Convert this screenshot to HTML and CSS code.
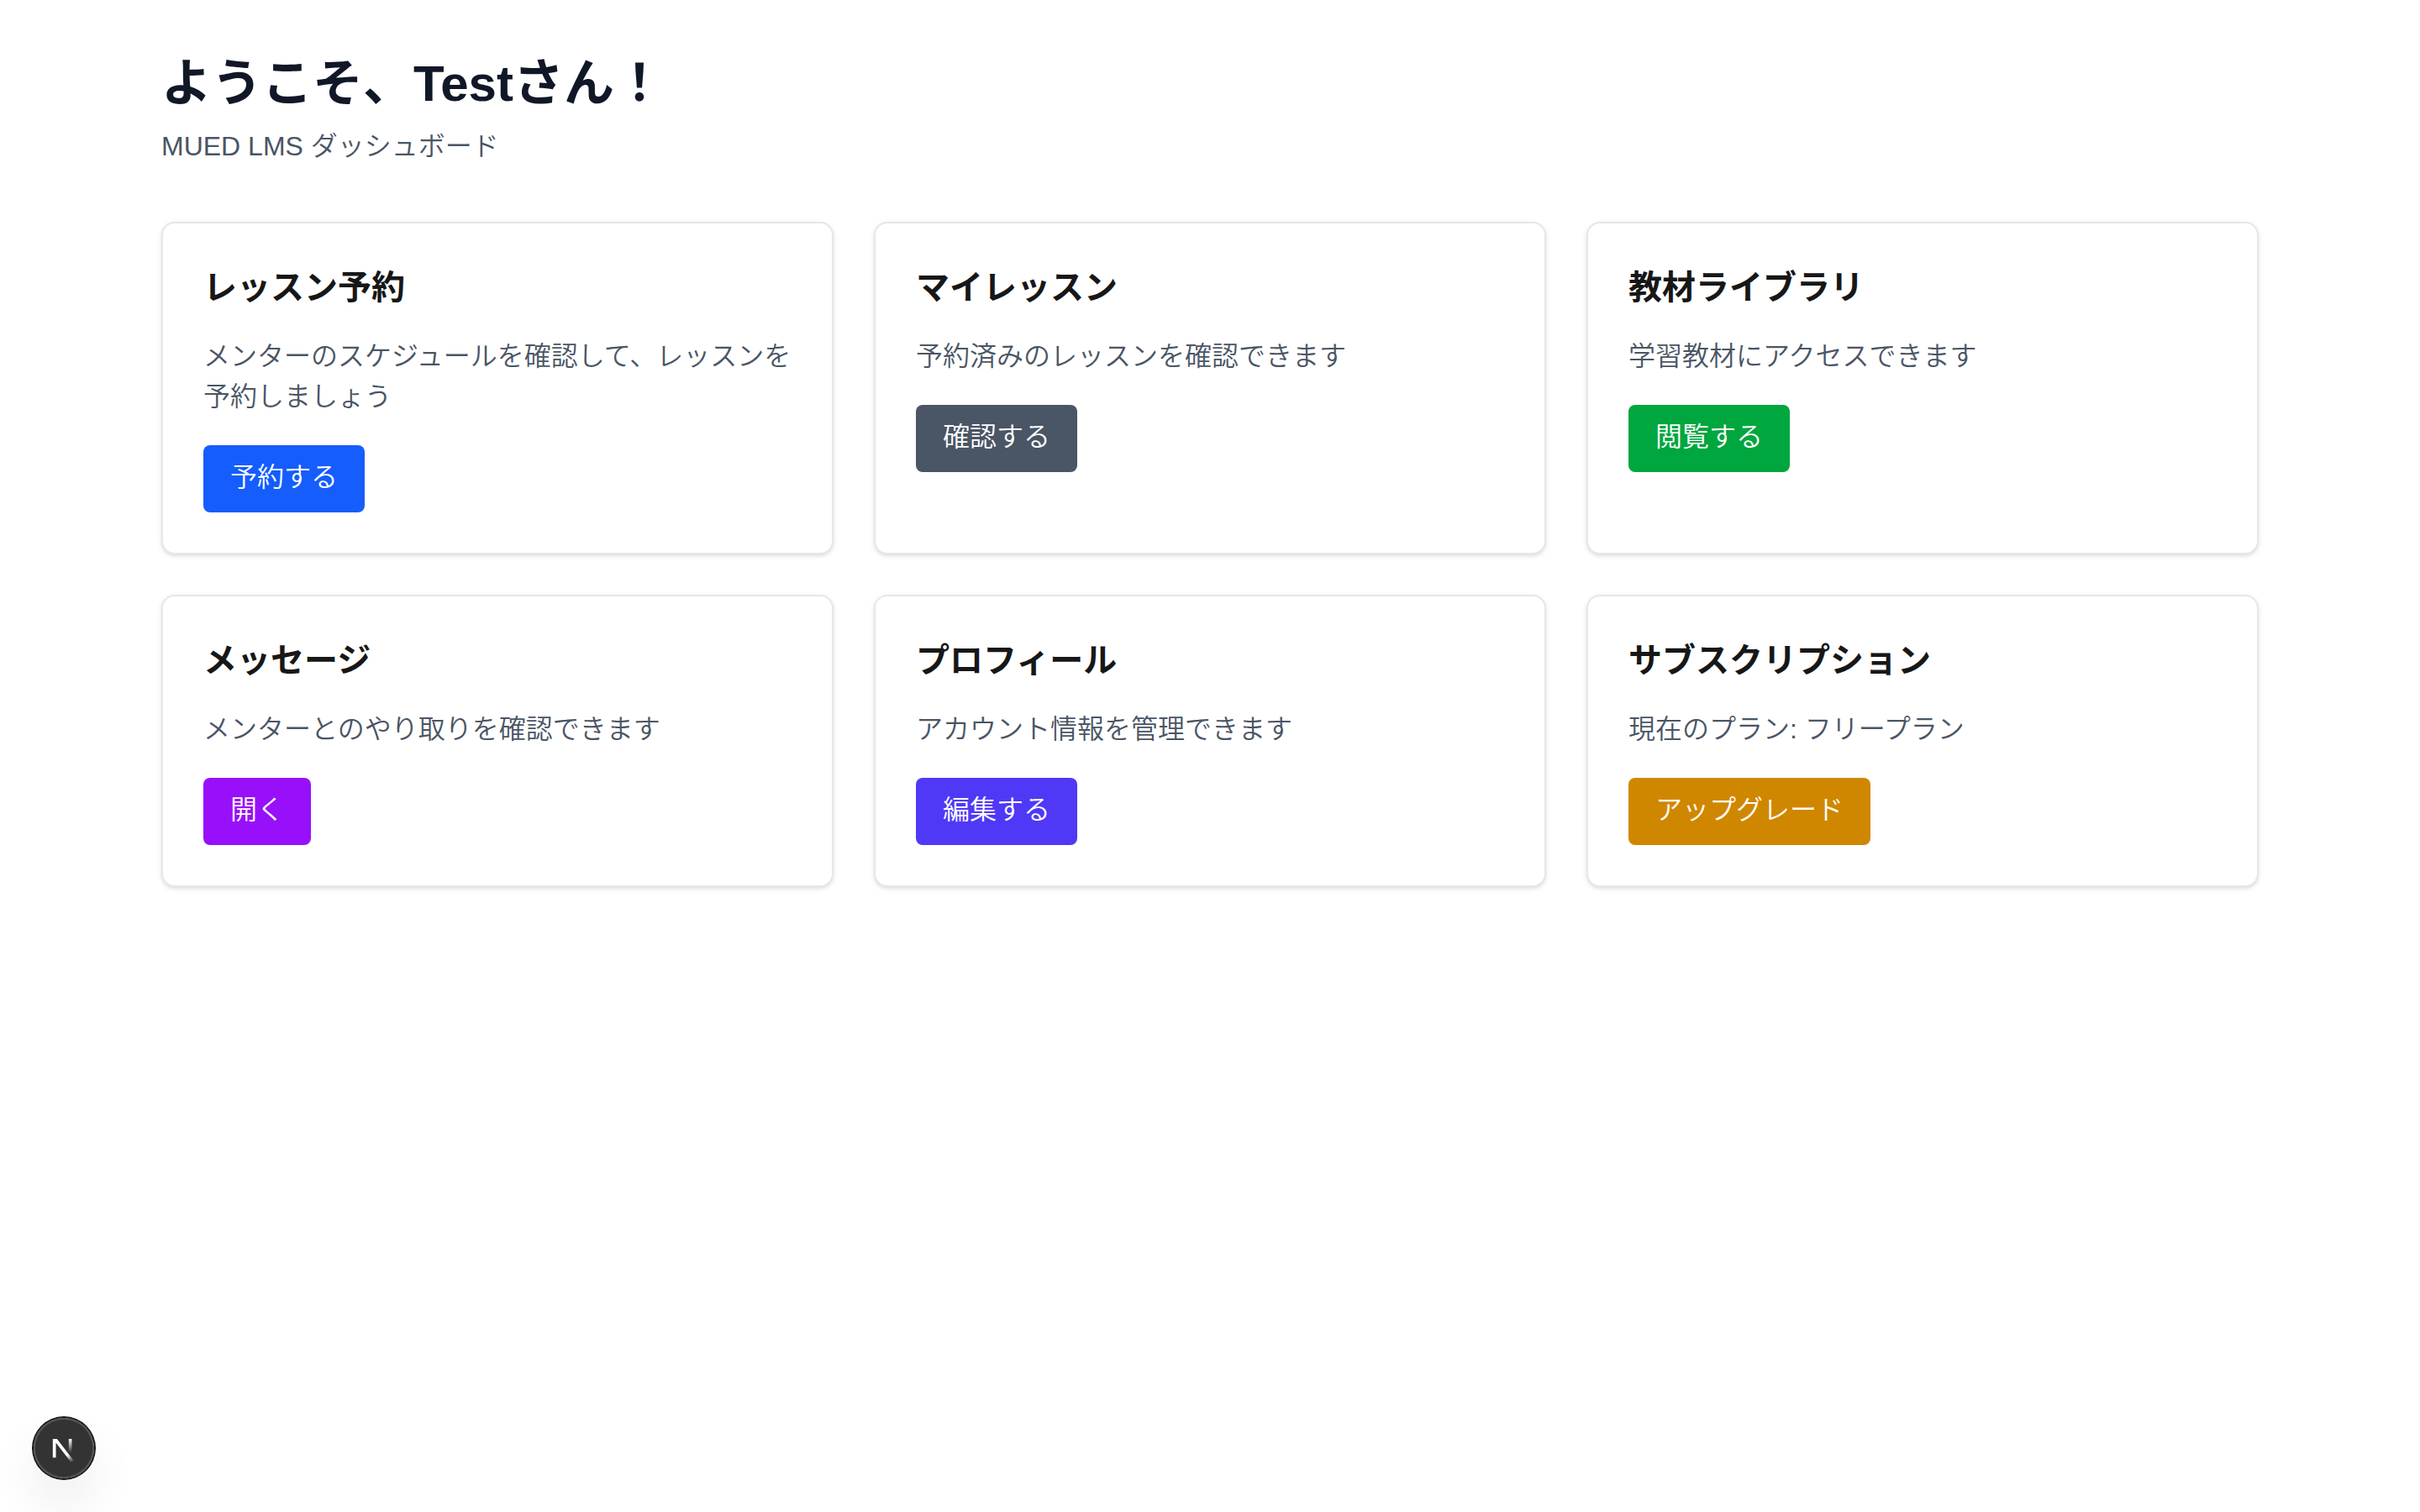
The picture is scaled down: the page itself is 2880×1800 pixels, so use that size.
FILE: index.html
```html
<!DOCTYPE html>
<html lang="ja">
<head>
<meta charset="utf-8">
<meta name="viewport" content="width=device-width, initial-scale=1">
<title>MUED LMS ダッシュボード</title>
<link rel="stylesheet" href="styles.css">
</head>
<body>
<main class="dashboard">
  <header class="intro">
    <h1 class="intro-title">ようこそ、Testさん！</h1>
    <p class="intro-text">MUED LMS ダッシュボード</p>
  </header>
  <div class="cards">
    <section class="card">
      <h2 class="card-title">レッスン予約</h2>
      <p class="card-text">メンターのスケジュールを確認して、レッスンを予約しましょう</p>
      <a class="action action-blue" href="#booking">予約する</a>
    </section>
    <section class="card">
      <h2 class="card-title">マイレッスン</h2>
      <p class="card-text">予約済みのレッスンを確認できます</p>
      <a class="action action-gray" href="#lessons">確認する</a>
    </section>
    <section class="card">
      <h2 class="card-title">教材ライブラリ</h2>
      <p class="card-text">学習教材にアクセスできます</p>
      <a class="action action-green" href="#library">閲覧する</a>
    </section>
    <section class="card">
      <h2 class="card-title">メッセージ</h2>
      <p class="card-text">メンターとのやり取りを確認できます</p>
      <a class="action action-purple" href="#messages">開く</a>
    </section>
    <section class="card">
      <h2 class="card-title">プロフィール</h2>
      <p class="card-text">アカウント情報を管理できます</p>
      <a class="action action-indigo" href="#profile">編集する</a>
    </section>
    <section class="card">
      <h2 class="card-title">サブスクリプション</h2>
      <p class="card-text">現在のプラン: フリープラン</p>
      <a class="action action-amber" href="#subscription">アップグレード</a>
    </section>
  </div>
</main>
<button class="devtools" type="button" aria-label="Next.js Dev Tools">
  <svg class="devtools-logo" viewBox="2 2 36 36" fill="none" aria-hidden="true">
    <defs>
      <linearGradient id="diagonal" x1="9.95555" y1="11.1226" x2="15.4778" y2="17.9671" gradientUnits="userSpaceOnUse">
        <stop stop-color="#fff"/><stop offset=".604072" stop-color="#fff" stop-opacity="0"/><stop offset="1" stop-color="#fff" stop-opacity="0"/>
      </linearGradient>
      <linearGradient id="stem" x1="11.8222" y1="1.40039" x2="11.791" y2="9.62542" gradientUnits="userSpaceOnUse">
        <stop stop-color="#fff"/><stop offset="1" stop-color="#fff" stop-opacity="0"/>
      </linearGradient>
      <clipPath id="logo-bounds"><rect x="0" y="1.5" width="16" height="16"/></clipPath>
    </defs>
    <g transform="translate(12 13)">
      <path d="M13.3 15.2 2.34 1v11.6" stroke="url(#diagonal)" stroke-width="1.86" clip-path="url(#logo-bounds)"/>
      <path d="M11.825 1.5v11.6" stroke="url(#stem)" stroke-width="1.86"/>
    </g>
  </svg>
</button>
</body>
</html>
```
FILE: styles.css
```css
*,
*::before,
*::after {
  box-sizing: border-box;
}

body {
  margin: 0;
  min-height: 100vh;
  background: #fff;
  color: #171717;
  font-family: "Liberation Sans", "Noto Sans CJK JP", sans-serif;
  font-size: 32px;
  font-weight: 350;
  line-height: 48px;
}

h1,
h2,
p {
  margin: 0;
}

.dashboard {
  max-width: 2560px;
  margin: 0 auto;
  padding: 64px 32px;
}

.intro {
  margin-bottom: 64px;
}

.intro-title {
  color: #101828;
  font-size: 60px;
  font-weight: 700;
  line-height: 72px;
}

.intro-text {
  padding: 14px 0 2px;
  color: #4a5565;
}

.cards {
  display: grid;
  grid-template-columns: repeat(3, minmax(0, 1fr));
  gap: 48px;
}

.card {
  display: flex;
  flex-direction: column;
  align-items: flex-start;
  padding: 48px;
  border: 2px solid #e5e7eb;
  border-radius: 16px;
  background: #fff;
  box-shadow: 0 2px 6px rgb(0 0 0 / 10%), 0 2px 4px -2px rgb(0 0 0 / 10%);
}

.card-title {
  font-size: 40px;
  font-weight: 600;
  line-height: 56px;
}

.card-text {
  padding: 30px 0 34px;
  color: #4a5565;
}

.action {
  padding: 14px 32px 18px;
  border-radius: 8px;
  color: #fff;
  text-decoration: none;
}

.action-blue { background: #155dfc; }
.action-gray { background: #4a5565; }
.action-green { background: #00a63e; }
.action-purple { background: #9810fa; }
.action-indigo { background: #4f39f6; }
.action-amber { background: #d08700; }

.devtools {
  position: fixed;
  bottom: 40px;
  left: 40px;
  width: 72px;
  height: 72px;
  padding: 0;
  border: 0;
  border-radius: 50%;
  background: rgb(0 0 0 / 80%);
  box-shadow: 0 0 0 2px #171717, inset 0 0 0 2px rgb(255 255 255 / 14%), 0 32px 64px -16px rgb(0 0 0 / 24%);
}

.devtools-logo {
  display: block;
  width: 72px;
  height: 72px;
}

@media (max-width: 1600px) {
  .cards {
    grid-template-columns: repeat(2, minmax(0, 1fr));
  }
}

@media (max-width: 1000px) {
  .cards {
    grid-template-columns: minmax(0, 1fr);
  }
}
```
